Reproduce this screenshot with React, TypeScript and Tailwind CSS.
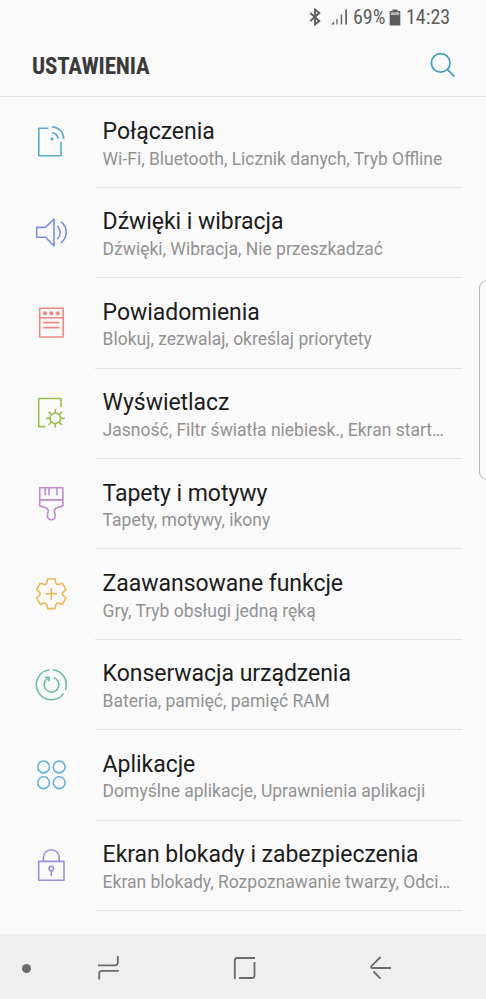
import type { ReactNode } from "react";

interface IconProps {
  color: string;
  children: ReactNode;
}

interface SettingsItem {
  title: string;
  subtitle: string;
  icon: ReactNode;
}

function Icon({ color, children }: IconProps) {
  return (
    <svg
      viewBox="0 0 36 36"
      className="-mt-px h-9 w-9 flex-none"
      fill="none"
      stroke={color}
      strokeWidth="1.6"
      strokeLinejoin="round"
    >
      {children}
    </svg>
  );
}

const sunRays = [0, 45, 90, 135, 180, 225, 270, 315];

// Outline of the six-toothed gear, centered on (18.3, 17.8)
function gearPath() {
  const point = (angle: number, r: number) => {
    const rad = (angle * Math.PI) / 180;
    return `${(18.3 + r * Math.sin(rad)).toFixed(2)} ${(17.8 - r * Math.cos(rad)).toFixed(2)}`;
  };
  let d = "";
  for (let a = 0; a < 360; a += 60) {
    d += `${a === 0 ? "M" : "L"}${point(a - 14, 15.3)}L${point(a + 14, 15.3)}`;
    d += `L${point(a + 21, 12.2)}Q${point(a + 30, 10.2)} ${point(a + 39, 12.2)}`;
  }
  return `${d}Z`;
}

const items: SettingsItem[] = [
  {
    title: "Połączenia",
    subtitle: "Wi-Fi, Bluetooth, Licznik danych, Tryb Offline",
    icon: (
      <Icon color="#5ba9d6">
        <path d="M15.3 4.3H5.8V31.7H28V18" />
        <path d="M19 2.9A11.8 11.8 0 0 1 30.6 15M19 8.7A6.2 6.2 0 0 1 25 15" />
        <circle cx="19" cy="14.8" r="1.6" fill="#5ba9d6" stroke="none" />
      </Icon>
    ),
  },
  {
    title: "Dźwięki i wibracja",
    subtitle: "Dźwięki, Wibracja, Nie przeszkadzać",
    icon: (
      <Icon color="#7890df">
        <path d="M3.7 12.4H12.5L21 4V31L12.5 22.2H3.7Z" />
        <path d="M24.3 10.6Q27.2 13.4 27.2 17.3T24.3 24.2M28 6.7Q33.2 11 33.2 17.3T28 28" />
      </Icon>
    ),
  },
  {
    title: "Powiadomienia",
    subtitle: "Blokuj, zezwalaj, określaj priorytety",
    icon: (
      <Icon color="#f08a80">
        <path d="M6.7 3.2H30.2V32H6.7ZM6.7 12.7H30.2M10.3 17.6H26.3M10.3 22.6H26.3" />
        <g fill="#f08a80" stroke="none">
          <circle cx="12" cy="8.3" r="2.1" />
          <circle cx="18.3" cy="8.3" r="2.1" />
          <circle cx="24.7" cy="8.3" r="2.1" />
        </g>
      </Icon>
    ),
  },
  {
    title: "Wyświetlacz",
    subtitle: "Jasność, Filtr światła niebiesk., Ekran start…",
    icon: (
      <Icon color="#9bbf4d">
        <path d="M28 12V3.5H5.7V31.6H12.3" />
        <circle cx="22.3" cy="23.3" r="5.3" />
        {sunRays.map((angle) => (
          <path
            key={angle}
            d="M22.3 18V13.8"
            transform={`rotate(${angle} 22.3 23.3)`}
          />
        ))}
      </Icon>
    ),
  },
  {
    title: "Tapety i motywy",
    subtitle: "Tapety, motywy, ikony",
    icon: (
      <Icon color="#be8ccf">
        <path d="M6.7 1.7H29.9V19.8C26 21.6 21.7 21.3 21.4 24.4C21.3 26.7 22.4 27.7 22.2 30C22 32.4 20.6 33.7 18.3 33.7S14.6 32.4 14.4 30C14.2 27.7 15.3 26.7 15.2 24.4C14.9 21.3 10.6 21.6 6.7 19.8ZM6.7 13.9H29.9" />
        <path d="M12.3 2V9.2M16 2V9.2M24 2V9.2" />
      </Icon>
    ),
  },
  {
    title: "Zaawansowane funkcje",
    subtitle: "Gry, Tryb obsługi jedną ręką",
    icon: (
      <Icon color="#efb755">
        <path d={gearPath()} />
        <path d="M18.3 11.9V23.7M12.4 17.8H24.2" />
      </Icon>
    ),
  },
  {
    title: "Konserwacja urządzenia",
    subtitle: "Bateria, pamięć, pamięć RAM",
    icon: (
      <Icon color="#6fbfa8">
        <path d="M19.9 2.8A15 15 0 0 1 32.4 22.9M30.6 26.4A15 15 0 1 1 16.7 2.8" />
        <path d="M20.6 10.6A7.4 7.4 0 1 1 12.6 13.2" />
        <path d="M12 10.2H16.2V14.6M16.2 10.2L12.6 13.4" />
      </Icon>
    ),
  },
  {
    title: "Aplikacje",
    subtitle: "Domyślne aplikacje, Uprawnienia aplikacji",
    icon: (
      <Icon color="#68b2dc">
        <circle cx="10.6" cy="10" r="5.9" />
        <circle cx="26.2" cy="10" r="5.9" />
        <circle cx="10.6" cy="25.7" r="5.9" />
        <circle cx="26.2" cy="25.7" r="5.9" />
      </Icon>
    ),
  },
  {
    title: "Ekran blokady i zabezpieczenia",
    subtitle: "Ekran blokady, Rozpoznawanie twarzy, Odci…",
    icon: (
      <Icon color="#9c8fe0">
        <path d="M5.7 14.4H31V33.2H5.7ZM10.4 14.2V10.6A7.9 7.9 0 0 1 26.2 10.6V14.2" />
        <circle cx="18.3" cy="21.6" r="2.3" />
        <path d="M18.3 24V29.3" />
      </Icon>
    ),
  },
];

function StatusBar() {
  return (
    <div className="flex h-[34px] items-center pl-[309px] text-[20px] leading-[34px] text-[#5c5c5c]">
      <svg viewBox="0 0 12 18" className="h-[18px] w-3 flex-none" fill="none" stroke="#5c5c5c" strokeWidth="1.9">
        <path d="M1.3 5L10.3 13L6.1 16.4V1.6L10.3 5L1.3 13" />
      </svg>
      <svg viewBox="0 0 17 16" className="ml-[10px] h-4 w-[17px] flex-none" fill="#666">
        <path d="M0 15.5L3.2 12.3V15.5ZM5.3 10H6.6V15.5H5.3ZM9.7 5.5H11.2V15.5H9.7ZM14.2 .5H16V15.5H14.2Z" />
      </svg>
      <div className="ml-[5px] w-8 flex-none whitespace-nowrap [font-stretch:75%]">69%</div>
      <svg viewBox="0 0 12 17" className="ml-[4px] h-[17px] w-3 flex-none">
        <path d="M3.5 .5H8.5V2H11.3V16.5H.7V2H3.5Z" fill="#5c5c5c" />
        <path d="M1.8 3.2H10.2V6H1.8Z" fill="#b5b5b5" />
      </svg>
      <div className="ml-[5px] whitespace-nowrap [font-stretch:75%]">14:23</div>
    </div>
  );
}

function Header() {
  return (
    <header className="flex h-[63px] items-center justify-between border-b border-[#e2e2e2] pr-[30px] pl-8">
      <h1 className="pt-[3px] text-[23px] leading-7 font-bold tracking-[-0.12px] whitespace-nowrap text-[#3a3a3a] [font-stretch:75%]">
        USTAWIENIA
      </h1>
      <svg viewBox="0 0 26 26" className="h-[26px] w-[26px]" fill="none" stroke="#3b9cc0" strokeWidth="1.7">
        <circle cx="10.7" cy="10.9" r="9.3" />
        <path d="M17.6 17.6L24.2 24.4" />
      </svg>
    </header>
  );
}

function SettingsRow({ title, subtitle, icon }: SettingsItem) {
  return (
    <li className="flex h-[90.4px] items-center pl-[33px]">
      {icon}
      <div className="mr-6 ml-[26px] flex h-full min-w-0 flex-1 flex-col border-b border-[#e4e4e4] pt-[19.6px] pl-[7.6px] whitespace-nowrap">
        <div className="text-[23px] leading-[30px] tracking-[-0.04px] text-[#1c1c1c]">{title}</div>
        <div className="-mt-[0.5px] text-[17.5px] leading-6 text-[#929292]">{subtitle}</div>
      </div>
    </li>
  );
}

function NavigationBar() {
  return (
    <nav className="flex h-[65px] items-center bg-[#efefef] pt-[3px]">
      <div className="ml-[22px] h-[9px] w-[9px] rounded-full bg-[#6b6b6b]" />
      <svg viewBox="0 0 24 24" className="ml-[65px] h-6 w-6" fill="none" stroke="#6b6b6b" strokeWidth="1.8">
        <path d="M2 9.3H19Q21.8 9.3 21.8 6.5V0M3.2 23.5V17.5Q3.2 14.8 6 14.8H22.8" />
      </svg>
      <svg viewBox="0 0 24 24" className="ml-[112px] h-6 w-6" fill="none" stroke="#6b6b6b" strokeWidth="1.8">
        <path d="M2.8 23V4.5Q2.8 2 5.3 2H23M22.5 6V19.5Q22.5 22 20 22H7" />
      </svg>
      <svg viewBox="0 0 24 24" className="ml-[112px] h-6 w-6" fill="none" stroke="#6b6b6b" strokeWidth="1.8">
        <path d="M12.5 1L3.7 9.8Q2 12 4.5 12H23M5.5 15.5L12.5 22.7" />
      </svg>
    </nav>
  );
}

function App() {
  return (
    <div className="relative flex h-[999px] w-[486px] flex-col overflow-hidden bg-[#fafafa] font-[Roboto,sans-serif]">
      <StatusBar />
      <Header />
      <ul className="flex-1 pt-[0.5px]">
        {items.map((item) => (
          <SettingsRow key={item.title} {...item} />
        ))}
      </ul>
      <NavigationBar />
      {/* Edge panel handle */}
      <div className="absolute top-[280px] -right-3 h-[200px] w-[19px] rounded-lg border border-[#b8b8b8] bg-[#fcfcfc]" />
    </div>
  );
}

export default App;
